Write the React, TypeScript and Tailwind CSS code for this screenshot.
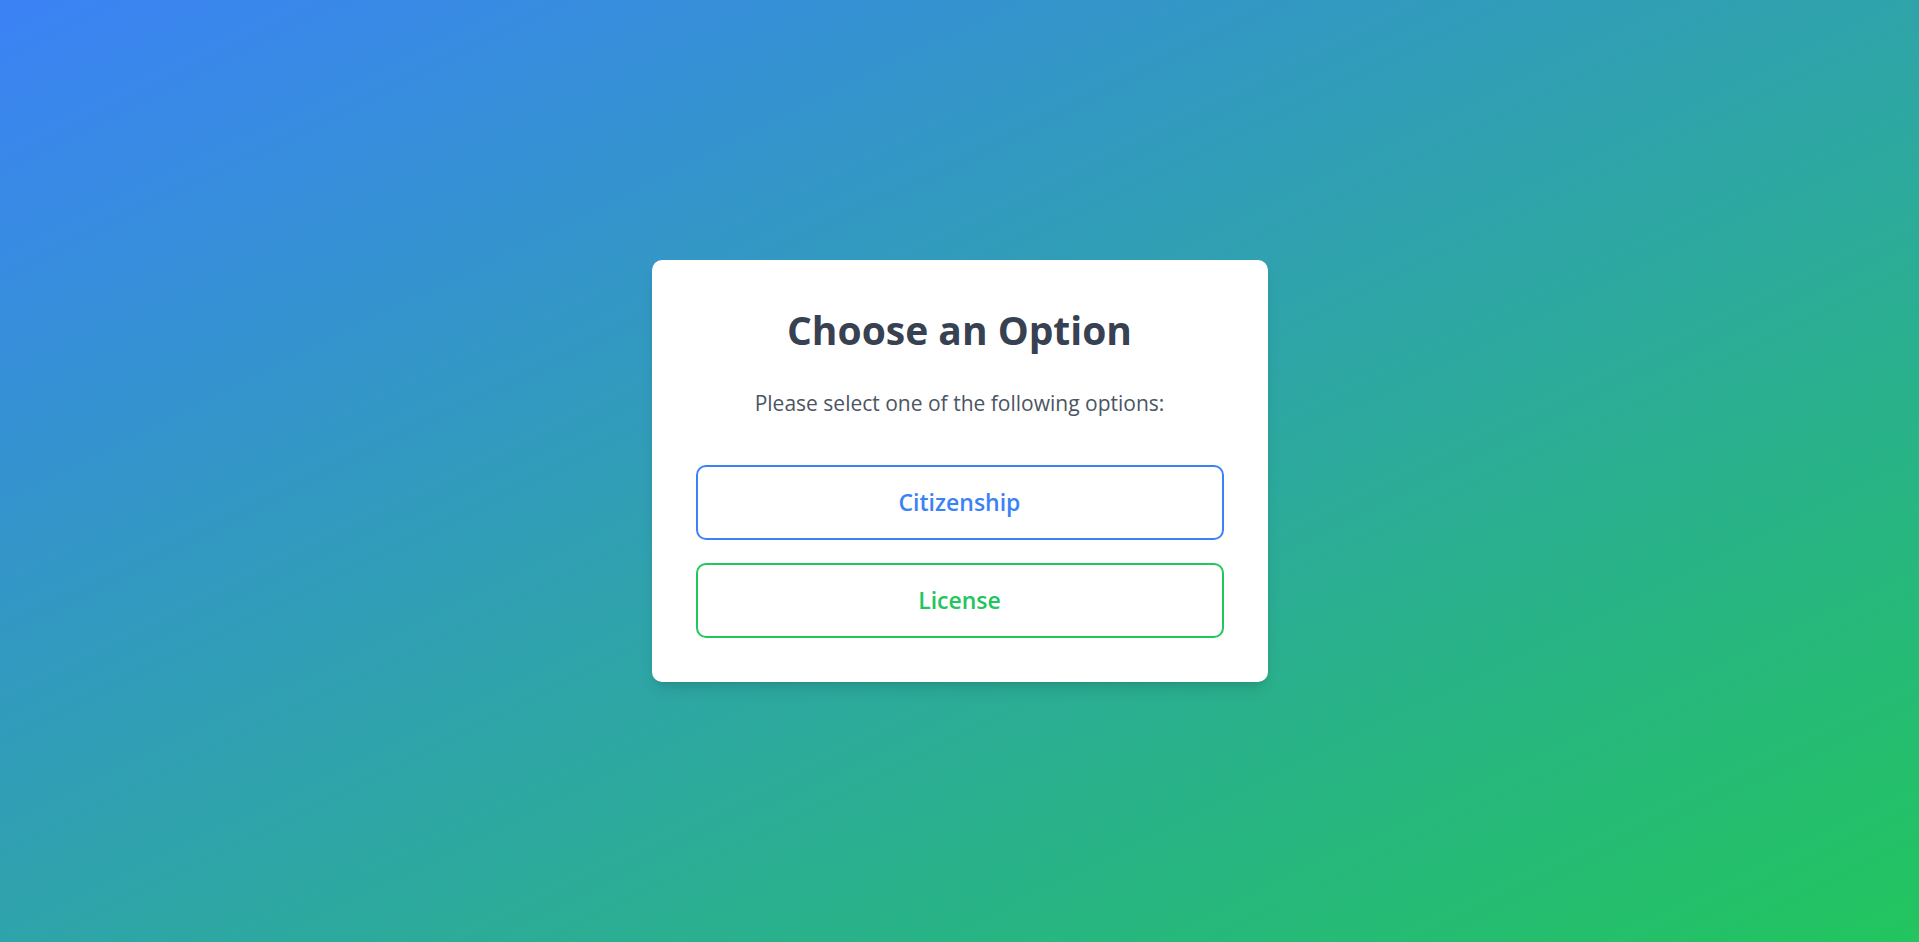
const App = () => {
  return (
    <div
      className="flex min-h-screen items-center justify-center bg-[linear-gradient(to_bottom_right,#3b82f6,#22c55e)]"
      style={{ fontFamily: '"Open Sans", "Noto Sans", sans-serif' }}
    >
      <div className="w-[616px] rounded-[10px] bg-white px-[44px] pb-[44px] pt-[46px] shadow-[0_10px_15px_-3px_rgba(0,0,0,0.1),0_4px_6px_-4px_rgba(0,0,0,0.1)]">
        <h1 className="text-center text-[39px] font-bold leading-[1.25] text-[#374151]">
          Choose an Option
        </h1>
        <p className="mt-[33px] text-center text-[21px] leading-[1.5] text-[#4b5563]">
          Please select one of the following options:
        </p>
        <div className="mt-[45px] flex flex-col gap-[23px]">
          <button className="h-[75px] w-full rounded-[10px] border-2 border-[#3b82f6] bg-white text-[23px] font-semibold text-[#3b82f6]">
            Citizenship
          </button>
          <button className="h-[75px] w-full rounded-[10px] border-2 border-[#22c55e] bg-white text-[23px] font-semibold text-[#22c55e]">
            License
          </button>
        </div>
      </div>
    </div>
  );
};

export default App;
